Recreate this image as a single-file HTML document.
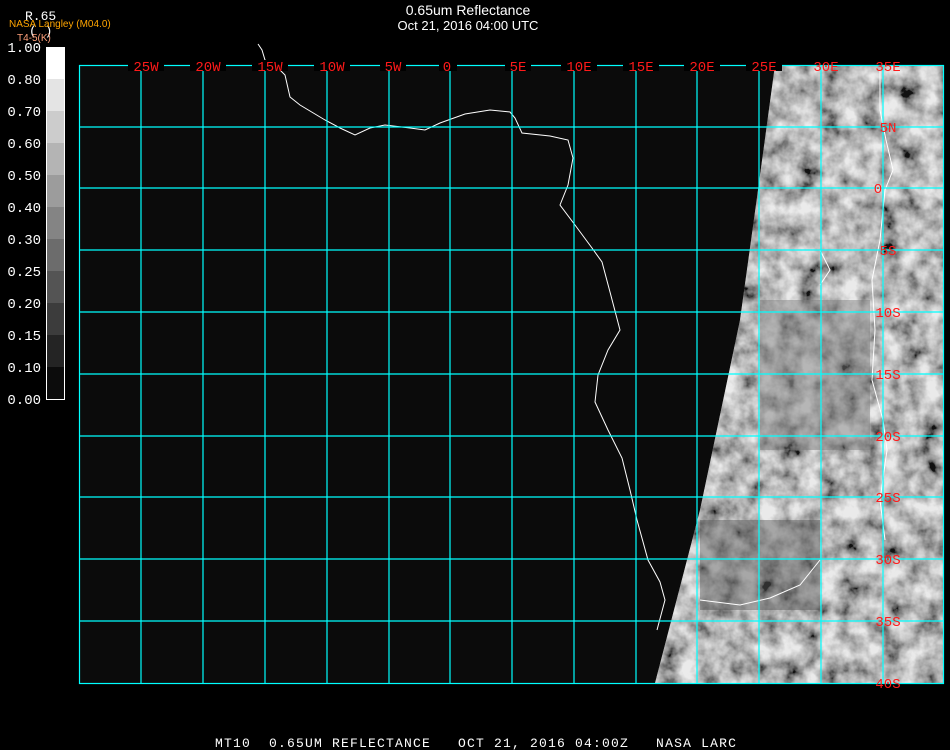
<!DOCTYPE html>
<html><head><meta charset="utf-8"><style>
html,body{margin:0;padding:0;background:#000;width:950px;height:750px;overflow:hidden}
svg{display:block}
</style></head><body>
<svg width="950" height="750" viewBox="0 0 950 750" xmlns="http://www.w3.org/2000/svg">
<defs>
<filter id="n" x="0" y="0" width="100%" height="100%">
<feTurbulence type="fractalNoise" baseFrequency="0.05" numOctaves="4" seed="3" result="t"/>
<feColorMatrix in="t" type="matrix" values="1.7 0 0 0 -0.3  1.7 0 0 0 -0.3  1.7 0 0 0 -0.3  0 0 0 0 1"/>
</filter>
<clipPath id="sat"><polygon points="775,65 943,65 943,683 655,683 700,510 740,320 758,190"/></clipPath>
</defs>
<rect x="79" y="65" width="864" height="618" fill="#0b0b0b"/>
<g clip-path="url(#sat)">
<rect x="640" y="60" width="310" height="630" fill="#777"/>
<rect x="640" y="60" width="310" height="630" filter="url(#n)" opacity="0.85"/>
<rect x="760" y="300" width="110" height="150" fill="#777" opacity="0.45"/>
<rect x="700" y="520" width="120" height="90" fill="#555" opacity="0.45"/>
</g>
<path d="M258,44 L262,50 L265,60 L278,68 L285,75 L290,97 L300,105 L325,120 L340,128 L355,135 L370,128 L385,125 L410,128 L425,130 L440,123 L465,114 L490,110 L510,112 L515,118 L522,133 L550,136 L568,140 L573,158 L568,185 L560,205 L575,225 L592,248 L602,262 L610,292 L620,330 L608,350 L598,375 L595,402 L608,430 L622,458 L630,490 L637,520 L648,560 L660,582 L665,600 L657,630 M880,70 L880,110 L886,140 L893,170 L885,190 L880,240 L872,280 L875,330 L872,380 L883,420 L887,450 L880,500 L885,540 M820,250 L830,270 L820,285 M700,600 L740,605 L770,598 L800,585 L820,560" fill="none" stroke="#fff" stroke-width="1"/>
<g stroke="#00ffff" stroke-width="1.2" fill="none">
<rect x="79.5" y="65.5" width="864" height="618"/>
<path d="M141,65V683M203,65V683M265,65V683M327,65V683M389,65V683M450,65V683M512,65V683M574,65V683M636,65V683M697,65V683M759,65V683M821,65V683M883,65V683"/>
<path d="M79,127H943M79,188H943M79,250H943M79,312H943M79,374H943M79,436H943M79,497H943M79,559H943M79,621H943"/>
</g>
<g font-family="Liberation Mono, monospace" font-size="14" fill="#ff1a1a" text-anchor="middle">
<rect x="128" y="60" width="36" height="11" fill="#000"/><text x="146" y="71">25W</text>
<rect x="190" y="60" width="36" height="11" fill="#000"/><text x="208" y="71">20W</text>
<rect x="252" y="60" width="36" height="11" fill="#000"/><text x="270" y="71">15W</text>
<rect x="314" y="60" width="36" height="11" fill="#000"/><text x="332" y="71">10W</text>
<rect x="380" y="60" width="26" height="11" fill="#000"/><text x="393" y="71">5W</text>
<rect x="439" y="60" width="18" height="11" fill="#000"/><text x="447" y="71">0</text>
<rect x="505" y="60" width="26" height="11" fill="#000"/><text x="518" y="71">5E</text>
<rect x="561" y="60" width="36" height="11" fill="#000"/><text x="579" y="71">10E</text>
<rect x="623" y="60" width="36" height="11" fill="#000"/><text x="641" y="71">15E</text>
<rect x="684" y="60" width="36" height="11" fill="#000"/><text x="702" y="71">20E</text>
<rect x="746" y="60" width="36" height="11" fill="#000"/><text x="764" y="71">25E</text>
<text x="826" y="71">30E</text>
<text x="888" y="71">35E</text>
<text x="888" y="132">5N</text>
<text x="878" y="193">0</text>
<text x="888" y="255">5S</text>
<text x="888" y="317">10S</text>
<text x="888" y="379">15S</text>
<text x="888" y="441">20S</text>
<text x="888" y="502">25S</text>
<text x="888" y="564">30S</text>
<text x="888" y="626">35S</text>
<text x="888" y="688">40S</text>
</g>
<g>
<rect x="46" y="47" width="18" height="32" fill="#fff"/>
<rect x="46" y="79" width="18" height="32" fill="#e4e4e4"/>
<rect x="46" y="111" width="18" height="32" fill="#cccccc"/>
<rect x="46" y="143" width="18" height="32" fill="#b4b4b4"/>
<rect x="46" y="175" width="18" height="32" fill="#9c9c9c"/>
<rect x="46" y="207" width="18" height="32" fill="#848484"/>
<rect x="46" y="239" width="18" height="32" fill="#6c6c6c"/>
<rect x="46" y="271" width="18" height="32" fill="#545454"/>
<rect x="46" y="303" width="18" height="32" fill="#3c3c3c"/>
<rect x="46" y="335" width="18" height="32" fill="#242424"/>
<rect x="46" y="367" width="18" height="32" fill="#0c0c0c"/>
<rect x="46.5" y="47.5" width="18" height="352" fill="none" stroke="#fff" stroke-width="1"/>
</g>
<g font-family="Liberation Mono, monospace" font-size="14" fill="#fff" text-anchor="end">
<text x="41" y="52">1.00</text><text x="41" y="84">0.80</text><text x="41" y="116">0.70</text>
<text x="41" y="148">0.60</text><text x="41" y="180">0.50</text><text x="41" y="212">0.40</text>
<text x="41" y="244">0.30</text><text x="41" y="276">0.25</text><text x="41" y="308">0.20</text>
<text x="41" y="340">0.15</text><text x="41" y="372">0.10</text><text x="41" y="404">0.00</text>
</g>
<text x="25" y="20" font-family="Liberation Mono, monospace" font-size="13" fill="#fff">R.65</text>
<text x="29" y="35" font-family="Liberation Mono, monospace" font-size="13" fill="#fff">(  )</text>
<text x="9" y="27" font-family="Liberation Sans, sans-serif" font-size="10" fill="#ffa500">NASA Langley (M04.0)</text>
<text x="17" y="41" font-family="Liberation Sans, sans-serif" font-size="10" fill="#ffa07a">T4-5(K)</text>
<text x="468" y="15" font-family="Liberation Sans, sans-serif" font-size="14" fill="#fff" text-anchor="middle">0.65um Reflectance</text>
<text x="468" y="30" font-family="Liberation Sans, sans-serif" font-size="13" fill="#fff" text-anchor="middle">Oct 21, 2016 04:00 UTC</text>
<text x="215" y="747" font-family="Liberation Mono, monospace" font-size="13" letter-spacing="1.2" fill="#fff" xml:space="preserve">MT10  0.65UM REFLECTANCE   OCT 21, 2016 04:00Z   NASA LARC</text>
</svg>
</body></html>
